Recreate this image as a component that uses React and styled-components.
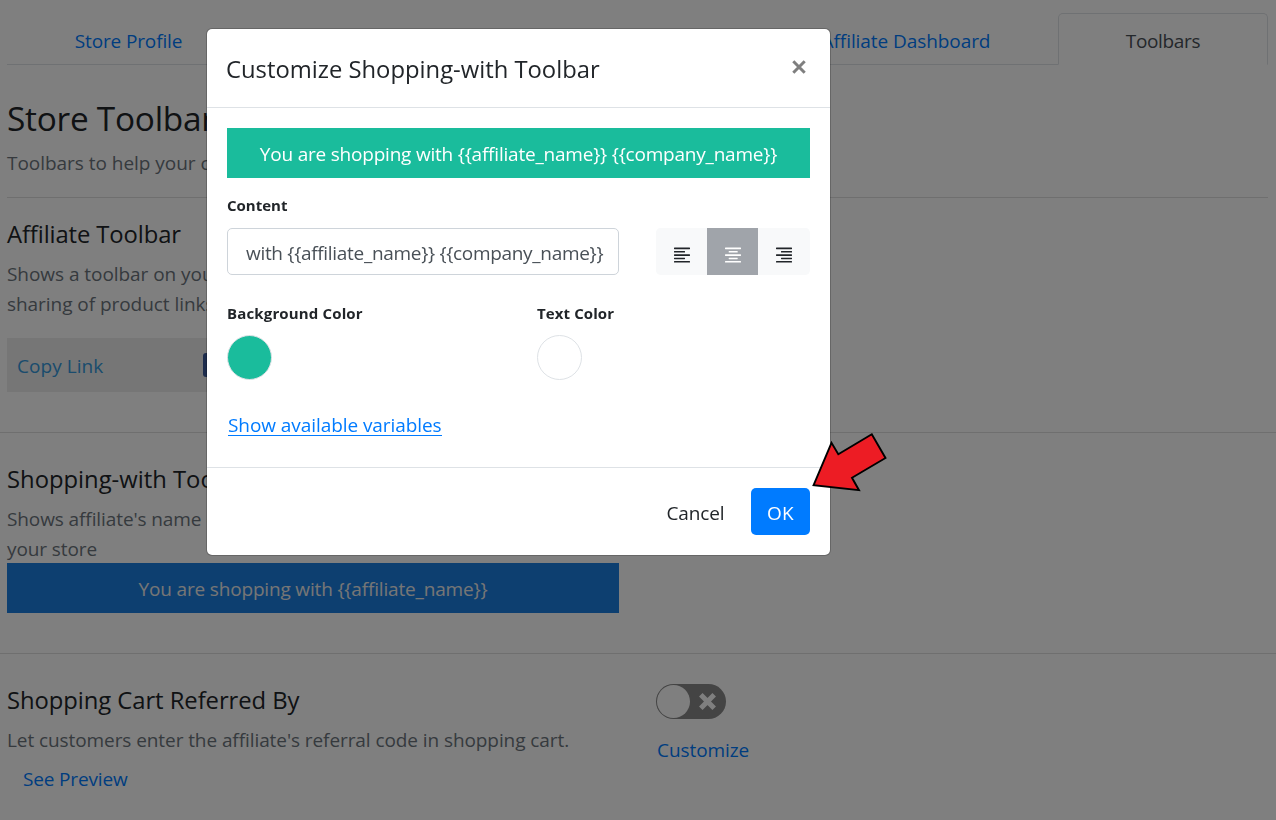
import React from "react";
import styled, { createGlobalStyle } from "styled-components";

const Global = createGlobalStyle`
  *, *::before, *::after { box-sizing: border-box; }
  html, body { margin: 0; height: 820px; overflow: hidden; background: #fff; }
  body { font-family: "Open Sans", "Noto Sans", sans-serif; font-size: 19px; line-height: 30px; color: #212529; }
  h1, h4, p { margin: 0; font-weight: 400; }
  button { font: inherit; border: 0; background: none; padding: 0; }
`;

const Txt = styled.span`
  white-space: pre;
  letter-spacing: ${(p) => p.$ls || 0}px;
`;

const Page = styled.main`
  height: 820px;
  padding-top: 13px;
`;
const Tabs = styled.nav`
  display: flex;
  height: 52px;
  margin: 0 8px 0 7px;
  border-bottom: 1px solid #dee2e6;
`;
const Tab = styled.a`
  display: flex;
  justify-content: center;
  width: ${(p) => p.$w}px;
  height: 52px;
  padding-top: 12px;
  border: 1px solid ${(p) => (p.$active ? "#dee2e6" : "transparent")};
  border-bottom-color: ${(p) => (p.$active ? "#fff" : "transparent")};
  border-radius: 5px 5px 0 0;
  color: ${(p) => (p.$active ? "#495057" : "#007bff")};
  background: ${(p) => (p.$active ? "#fff" : "transparent")};
`;
const TabGap = styled.div`
  flex: 1;
`;
const Intro = styled.header`
  margin: 0 8px 0 7px;
  height: 133px;
  padding-top: 32px;
  border-bottom: 1px solid #dfdfdf;
`;
const PageTitle = styled.h1`
  font-size: 33.4px;
  line-height: 42px;
  margin-bottom: 9px;
`;
const Muted = styled.p`
  color: #6c757d;
  line-height: 30px;
`;
const Section = styled.section`
  display: flex;
  height: ${(p) => p.$h}px;
  padding: ${(p) => p.$top}px 7px 0;
  border-bottom: 1px solid #dfdfdf;
`;
const Info = styled.div`
  width: 612px;
  margin-right: 37px;
`;
const Heading = styled.h4`
  font-size: 23.8px;
  line-height: 30px;
  margin-bottom: 10px;
`;
const ShareBox = styled.div`
  display: flex;
  align-items: center;
  height: 54px;
  margin-top: 19px;
  padding: 2px 0 0 10px;
  background: #ececec;
  color: #3498db;
`;
const ShareButton = styled.span`
  width: 60px;
  height: 24px;
  margin: -2px 0 0 100px;
  border-radius: 3px;
  background: #3b5998;
`;
const Banner = styled.div`
  display: flex;
  align-items: center;
  justify-content: center;
  height: 50px;
  padding-top: 2px;
  margin-top: ${(p) => p.$mt || 0}px;
  color: ${(p) => p.$fg || "#fff"};
  background: ${(p) => p.$bg};
`;
const Preview = styled.a`
  display: block;
  margin: 9px 0 0 16px;
  color: #007bff;
`;
const Controls = styled.div`
  display: flex;
  flex-direction: column;
`;
const Toggle = styled.div`
  display: flex;
  align-items: center;
  width: 70px;
  height: 35px;
  margin-top: -1px;
  padding: 1px;
  border-radius: 18px;
  background: #888;
`;
const Knob = styled.span`
  width: 33px;
  height: 33px;
  margin-right: 9px;
  border-radius: 50%;
  background: #fff;
`;
const Customize = styled.a`
  margin: 16px 0 0 1px;
  color: #007bff;
`;

const Backdrop = styled.div`
  position: fixed;
  inset: 0;
  padding: 28px 0 0 206px;
  background: rgba(0, 0, 0, 0.5);
`;
const Dialog = styled.div`
  width: 625px;
  height: 528px;
  background: #fff;
  background-clip: padding-box;
  border: 1px solid rgba(0, 0, 0, 0.2);
  border-radius: 6px;
`;
const DialogHead = styled.div`
  display: flex;
  justify-content: space-between;
  height: 79px;
  padding: 25px 22px 0 19px;
  border-bottom: 1px solid #dee2e6;
`;
const DialogTitle = styled.h4`
  font-size: 23.8px;
  line-height: 30px;
`;
const Close = styled.button`
  height: 26px;
  display: flex;
  align-items: center;
  padding-right: 2px;
`;
const DialogBody = styled.div`
  height: 359px;
  padding: 20px 20px 0;
`;
const Label = styled.div`
  font-size: 15px;
  font-weight: 700;
  line-height: 24px;
`;
const Row = styled.div`
  display: flex;
  margin-top: ${(p) => p.$mt}px;
`;
const Input = styled.div`
  width: 392px;
  height: 47px;
  margin-right: 37px;
  padding: 9px 0 0 18px;
  border: 1px solid #ced4da;
  border-radius: 5px;
  color: #495057;
`;
const Group = styled.div`
  display: flex;
  width: 154px;
  height: 47px;
  border-radius: 5px;
  overflow: hidden;
  background: #f8f9fa;
`;
const AlignButton = styled.button`
  display: flex;
  align-items: center;
  justify-content: center;
  width: 51px;
  height: 47px;
  padding-top: 7px;
  color: ${(p) => (p.$on ? "#fff" : "#212529")};
  background: ${(p) => (p.$on ? "#a0a4aa" : "#f8f9fa")};
`;
const Field = styled.div`
  flex: none;
  width: ${(p) => p.$w}px;
`;
const Swatch = styled.div`
  width: 45px;
  height: 45px;
  margin-top: 10px;
  border: 1px solid #dee2e6;
  border-radius: 50%;
  background: ${(p) => p.$c};
`;
const VarsLink = styled.a`
  display: inline-block;
  height: 26px;
  margin: 30px 0 0 1px;
  line-height: 30px;
  color: #007bff;
  border-bottom: 1px solid #007bff;
`;
const DialogFoot = styled.div`
  display: flex;
  justify-content: flex-end;
  padding: 20px 20px 0;
  border-top: 1px solid #dee2e6;
`;
const Button = styled.button`
  height: 47px;
  width: ${(p) => p.$w}px;
  padding-top: 3px;
  border-radius: 5px;
  color: ${(p) => (p.$primary ? "#fff" : "#212529")};
  background: ${(p) => (p.$primary ? "#007bff" : "transparent")};
`;
const Pointer = styled.svg`
  position: fixed;
  left: 808px;
  top: 430px;
`;

const bars = {
  left: [[0, 16], [0, 11], [0, 16], [0, 11], [0, 16]],
  center: [[0, 16], [3.7, 9], [0, 16], [3.7, 9], [0, 16]],
  right: [[0, 16], [5, 11], [0, 16], [5, 11], [0, 16]],
};
const AlignIcon = ({ kind }) => (
  <svg width="16" height="16" viewBox="0 0 16 16" fill="currentColor">
    {bars[kind].map(([x, w], i) => (
      <rect key={i} x={x} y={0.6 + i * 3.35} width={w} height="1.6" rx="0.4" />
    ))}
  </svg>
);

export default function App() {
  return (
    <>
      <Global />
      <Page>
        <Tabs>
          <Tab $w={243}><Txt $ls={-0.13}>Store Profile</Txt></Tab>
          <TabGap />
          <Tab $w={304}><Txt $ls={-0.07}>Affiliate Dashboard</Txt></Tab>
          <Tab $w={210} $active><Txt $ls={-0.35}>Toolbars</Txt></Tab>
        </Tabs>
        <Intro>
          <PageTitle><Txt $ls={-0.25}>Store Toolbars</Txt></PageTitle>
          <Muted><Txt $ls={-0.03}>Toolbars to help your customers</Txt></Muted>
        </Intro>
        <Section $h={235} $top={21}>
          <Info>
            <Heading><Txt $ls={-0.1}>Affiliate Toolbar</Txt></Heading>
            <Muted><Txt $ls={-0.05}>Shows a toolbar on your store to allow easy</Txt></Muted>
            <Muted><Txt $ls={-0.05}>sharing of product links</Txt></Muted>
            <ShareBox><Txt $ls={0.05}>Copy Link</Txt><ShareButton /></ShareBox>
          </Info>
        </Section>
        <Section $h={221} $top={31}>
          <Info>
            <Heading>Shopping-with Toolbar</Heading>
            <Muted><Txt $ls={-0.1}>Shows affiliate's name on top of</Txt></Muted>
            <Muted><Txt $ls={-0.1}>your store</Txt></Muted>
            <Banner $bg="#1a7ee0" $fg="#ececec" $mt={-1}>
              <Txt $ls={-0.17}>{"You are shopping with {{affiliate_name}}"}</Txt>
            </Banner>
          </Info>
        </Section>
        <Section $h={180} $top={31}>
          <Info>
            <Heading><Txt $ls={-0.05}>Shopping Cart Referred By</Txt></Heading>
            <Muted><Txt $ls={-0.08}>Let customers enter the affiliate's referral code in shopping cart.</Txt></Muted>
            <Preview><Txt $ls={-0.15}>See Preview</Txt></Preview>
          </Info>
          <Controls>
            <Toggle>
              <Knob />
              <svg width="17" height="17" viewBox="0 0 17 17" stroke="#fff" strokeWidth="5">
                <path d="M1.8 1.8 15.2 15.2M15.2 1.8 1.8 15.2" />
              </svg>
            </Toggle>
            <Customize><Txt $ls={-0.07}>Customize</Txt></Customize>
          </Controls>
        </Section>
      </Page>
      <Backdrop>
        <Dialog>
          <DialogHead>
            <DialogTitle>Customize Shopping-with Toolbar</DialogTitle>
            <Close aria-label="Close">
              <svg width="14" height="14" viewBox="0 0 14 14" stroke="#7f7f7f" strokeWidth="3">
                <path d="M1.3 1.3 12.7 12.7M12.7 1.3 1.3 12.7" />
              </svg>
            </Close>
          </DialogHead>
          <DialogBody>
            <Banner $bg="#1abc9c">
              <Txt $ls={-0.21}>{"You are shopping with {{affiliate_name}} {{company_name}}"}</Txt>
            </Banner>
            <Row $mt={15}><Label>Content</Label></Row>
            <Row $mt={11}>
              <Input><Txt $ls={-0.31}>{"with {{affiliate_name}} {{company_name}}"}</Txt></Input>
              <Group>
                <AlignButton><AlignIcon kind="left" /></AlignButton>
                <AlignButton $on><AlignIcon kind="center" /></AlignButton>
                <AlignButton><AlignIcon kind="right" /></AlignButton>
              </Group>
            </Row>
            <Row $mt={26}>
              <Field $w={310}><Label><Txt $ls={0.15}>Background Color</Txt></Label><Swatch $c="#1abc9c" /></Field>
              <Field $w={273}><Label><Txt $ls={0.1}>Text Color</Txt></Label><Swatch $c="#fff" /></Field>
            </Row>
            <VarsLink><Txt $ls={-0.07}>Show available variables</Txt></VarsLink>
          </DialogBody>
          <DialogFoot>
            <Button $w={111}><Txt $ls={-0.1}>Cancel</Txt></Button>
            <Button $w={59} $primary><Txt $ls={0.2}>OK</Txt></Button>
          </DialogFoot>
        </Dialog>
      </Backdrop>
      <Pointer width="82" height="66" viewBox="0 0 82 66">
        <path d="M5.5 55.3 23.5 12.8 30.3 24.2 63.8 4.2 77.5 28 44 47.8 51 60.2Z" fill="#ed1c24" stroke="#000" strokeWidth="1.9" />
      </Pointer>
    </>
  );
}
